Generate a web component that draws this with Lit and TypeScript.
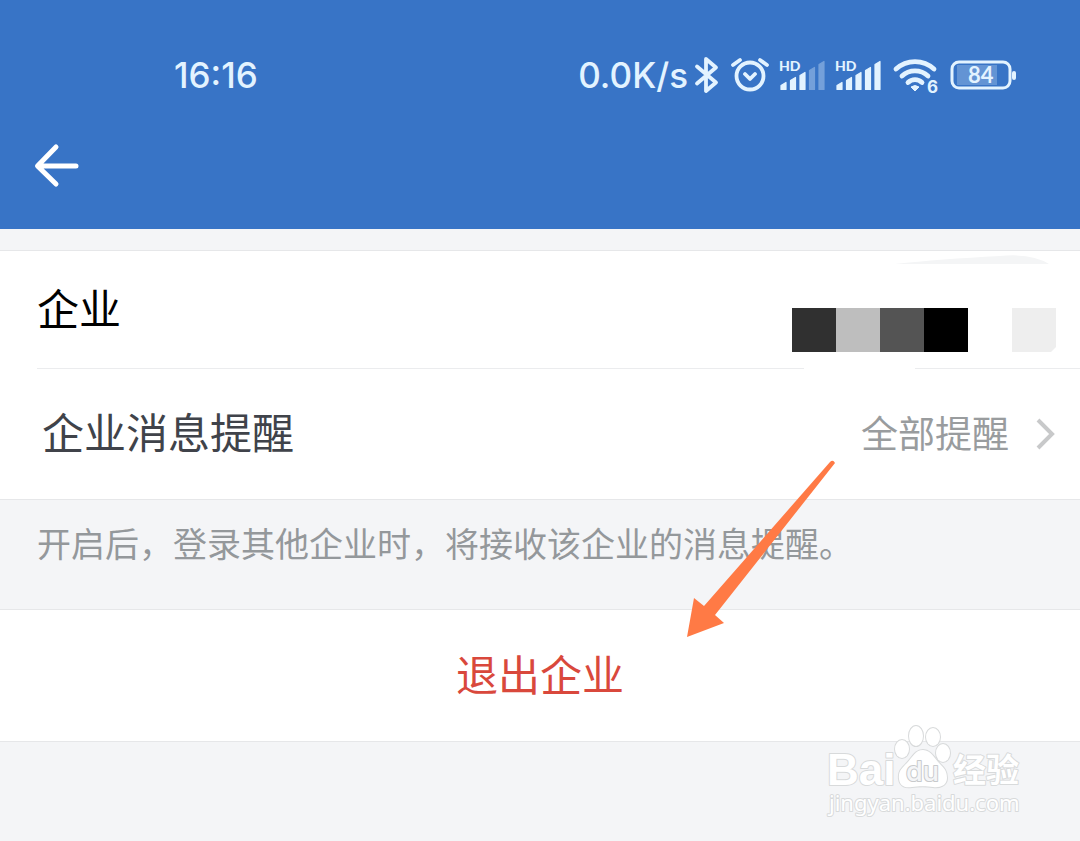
import { LitElement, html, css, svg } from "lit";
import { customElement } from "lit/decorators.js";

@customElement("status-bar")
class StatusBar extends LitElement {
  static styles = css`
    :host {
      display: flex;
      align-items: center;
      justify-content: space-between;
      height: 48px;
      padding: 51px 64px 1px 174px;
      color: #e3f3ff;
      font: 500 35px/48px Inter, "Noto Sans", sans-serif;
    }
    .right {
      display: flex;
      align-items: center;
      gap: 4px;
    }
    .icons {
      display: block;
      flex: none;
    }
    .hd {
      font: 900 14px Lato, sans-serif;
    }
    .six {
      font: 700 17px Inter, sans-serif;
    }
    .level {
      font: 700 22px Lato, sans-serif;
    }
  `;

  private signal(x: number, lit: number) {
    const heights = [7, 12, 17, 22, 28];
    return svg`
      <text class="hd" x=${x - 2} y="20">HD</text>
      ${heights.map(
        (h, i) => svg`<path
          opacity=${i < lit ? 1 : 0.35}
          d=${`M${x + i * 9.5} ${38.5}v${-(h - 3)}l5 -3v${h}z`}
          stroke="currentColor" stroke-width="1.200" stroke-linejoin="round" />`
      )}`;
  }

  render() {
    return html`
      <time>16:16</time>
      <div class="right">
        <span>0.0K/s</span>
        <svg class="icons" width="324" height="48" viewBox="0 0 324 48" fill="currentColor" role="img" aria-label="Status">
          <path d="M5 15.500 24 31.500 14 40V8L24 16.500 5 32.500" fill="none" stroke="currentColor" stroke-width="3.800" stroke-linejoin="round" stroke-linecap="round" />
          <g fill="none" stroke="currentColor" stroke-width="3.800" stroke-linecap="round" stroke-linejoin="round">
            <circle cx="58" cy="25" r="13.500" />
            <path d="M53 23l5 5 5-5M41 14l7-5M75 14l-7-5" />
          </g>
          ${this.signal(89, 3)} ${this.signal(145, 5)}
          <g fill="none" stroke="currentColor" stroke-width="4.800" stroke-linecap="round">
            <path d="M204 18a28 28 0 0 1 38 0" />
            <path d="M210 25a19 19 0 0 1 26 0" />
            <path d="M216 31.500a10 10 0 0 1 14 0" />
          </g>
          <path d="M219 36q4-3 8 0l-4 4z" stroke="currentColor" stroke-linejoin="round" />
          <text class="six" x="235" y="42">6</text>
          <rect x="265" y="14" width="40" height="20" opacity="0.250" />
          <rect x="260" y="11" width="58" height="26" rx="7" fill="none" stroke="currentColor" stroke-width="3" />
          <rect x="320" y="20" width="4" height="9" rx="2" />
          <text class="level" x="276" y="32">84</text>
        </svg>
      </div>
    `;
  }
}

@customElement("brand-watermark")
class BrandWatermark extends LitElement {
  static styles = css`
    :host {
      display: block;
    }
    .mark {
      display: block;
      fill: #fff;
      stroke: #d8dadb;
      stroke-width: 2px;
      paint-order: stroke;
      stroke-linejoin: round;
    }
    .name {
      font: 700 44px "Liberation Sans", sans-serif;
    }
    .du {
      font: 500 27px Inter, sans-serif;
      fill: #f4f5f7;
      stroke: #c8cacc;
    }
    .cn {
      font: 700 33px "Noto Sans CJK SC", sans-serif;
    }
    .site {
      font: 400 22px "Noto Sans", sans-serif;
    }
  `;

  render() {
    return html`
      <svg class="mark" width="200" height="104" viewBox="0 0 200 104" role="img" aria-label="Baidu">
        <text class="name" x="1" y="67">Bai</text>
        <ellipse cx="76" cy="31" rx="7" ry="9" />
        <ellipse cx="90" cy="18" rx="7" ry="10" />
        <ellipse cx="107" cy="19" rx="7" ry="9" />
        <ellipse cx="117" cy="35" rx="7" ry="9" />
        <path d="M97 32c-8 0-11 8-16 13s-9 8-8 16 7 9 13 8 15-1 21 0 14-1 14-9-4-11-8-15-8-13-16-13z" />
        <text class="du" x="80" y="63">du</text>
        <text class="cn" x="127" y="64">经验</text>
        <text class="site" x="3" y="93">jingyan.baidu.com</text>
      </svg>
    `;
  }
}

@customElement("app-root")
class AppRoot extends LitElement {
  static styles = css`
    :host {
      display: block;
      position: relative;
      min-height: 100vh;
      overflow: hidden;
      background: #f4f5f7;
      font-family: "Noto Sans CJK SC", sans-serif;
      font-size: 42px;
      line-height: 60px;
      color: #000;
    }
    .header {
      background: #3874c6;
      margin-bottom: 21px;
    }
    .nav {
      display: flex;
      align-items: center;
      height: 129px;
      padding: 0 32px;
    }
    button {
      box-sizing: border-box;
      font: inherit;
      border: 0;
      padding: 0;
      background: none;
      cursor: pointer;
    }
    .back,
    .chevron,
    .redacted {
      display: block;
      flex: none;
    }
    .group {
      background: #fff;
      border: solid #e6e7e9;
      border-width: 1px 0;
    }
    .company {
      display: flex;
      align-items: center;
      justify-content: space-between;
      margin-left: 37px;
      height: 117px;
      border-bottom: 1px solid #ebecee;
    }
    .name {
      padding-bottom: 6px;
    }
    .redacted {
      margin-bottom: -1px;
    }
    .notify {
      display: flex;
      align-items: center;
      width: 100%;
      height: 130px;
      padding: 0 25px 0 42px;
      color: #40434a;
      text-align: left;
    }
    .label {
      flex: 1;
      padding-bottom: 6px;
    }
    .value {
      font-size: 37px;
      color: #999c9e;
      margin-right: 26px;
      padding-bottom: 4px;
    }
    .hint {
      margin: 0;
      padding: 18px 37px 41px;
      font-size: 34px;
      line-height: 50px;
      color: #94989b;
    }
    .leave {
      display: block;
      width: 100%;
      height: 131px;
      padding-bottom: 6px;
      color: #d9483c;
    }
    .arrow {
      position: absolute;
      top: 458px;
      right: 242px;
      pointer-events: none;
    }
    .watermark {
      position: absolute;
      right: 54px;
      top: 718px;
      pointer-events: none;
    }
  `;

  render() {
    return html`
      <header class="header">
        <status-bar></status-bar>
        <nav class="nav">
          <button aria-label="返回">
            <svg class="back" width="48" height="48" viewBox="0 0 48 48" fill="none" stroke="#fff" stroke-width="5" stroke-linecap="round" stroke-linejoin="round">
              <path d="M24 6 5.500 25 24 43M6 25h38" />
            </svg>
          </button>
        </nav>
      </header>
      <main>
        <section class="group">
          <div class="company">
            <span class="name">企业</span>
            <svg class="redacted" width="310" height="118" viewBox="0 0 310 118" aria-hidden="true">
              <path d="M125 13Q170 8 230 5Q262 2 279 13z" fill="#f4f5f6" />
              <path d="M22 57h44v44H22z" fill="#303030" />
              <path d="M66 57h44v44H66z" fill="#bebebe" />
              <path d="M110 57h44v44h-44z" fill="#545454" />
              <path d="M154 57h44v44h-44z" />
              <path d="M242 57h44v39l-5 5h-39z" fill="#eee" />
              <path d="M34 116h111v2H34z" fill="#fff" />
            </svg>
          </div>
          <button class="notify">
            <span class="label">企业消息提醒</span>
            <span class="value">全部提醒</span>
            <svg class="chevron" width="20" height="34" viewBox="0 0 20 34" fill="none" stroke="#c8c9ca" stroke-width="4">
              <path d="M3 3l14 14L3 31" />
            </svg>
          </button>
        </section>
        <p class="hint">开启后，登录其他企业时，将接收该企业的消息提醒。</p>
        <section class="group">
          <button class="leave">退出企业</button>
        </section>
      </main>
      <svg class="arrow" width="154" height="182" viewBox="0 0 154 182" aria-hidden="true">
        <path d="M3 179 10 140 20 148 146 4Q149 1 151 5L31 157 40 165z" fill="#ff7a45" />
      </svg>
      <brand-watermark class="watermark"></brand-watermark>
    `;
  }
}
